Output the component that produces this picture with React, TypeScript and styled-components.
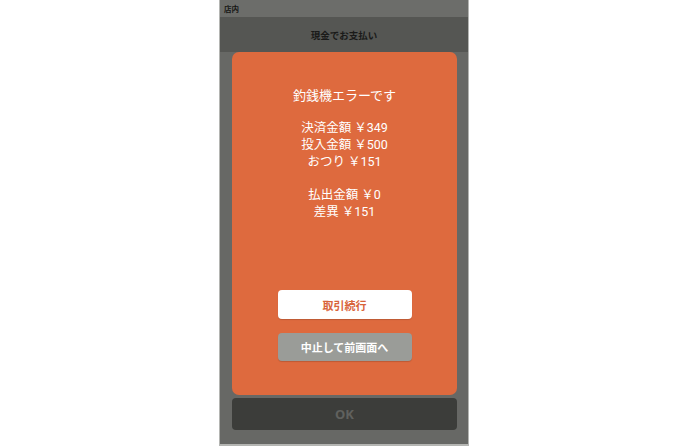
import React from "react";
import styled, { createGlobalStyle } from "styled-components";

const GlobalStyle = createGlobalStyle`
  html, body {
    margin: 0;
    padding: 0;
    background: #ffffff;
  }
  body {
    font-family: "Noto Sans CJK JP", "Noto Sans", sans-serif;
  }
`;

const App = () => {
  return (
    <>
      <GlobalStyle />
      <Page>
        <Screen>
          <StatusBar>店内</StatusBar>
          <Header>現金でお支払い</Header>
          <Content>
            <ErrorCard>
              <Title>釣銭機エラーです</Title>
              <InfoBlock>
                <Line>決済金額 ￥349</Line>
                <Line>投入金額 ￥500</Line>
                <Line>おつり ￥151</Line>
              </InfoBlock>
              <InfoBlock $gap={16}>
                <Line>払出金額 ￥0</Line>
                <Line>差異 ￥151</Line>
              </InfoBlock>
              <Actions>
                <CardButton $variant="primary">取引続行</CardButton>
                <CardButton $variant="secondary">中止して前画面へ</CardButton>
              </Actions>
            </ErrorCard>
            <OkButton disabled>OK</OkButton>
          </Content>
        </Screen>
      </Page>
    </>
  );
};

export default App;

const Page = styled.div`
  display: flex;
  justify-content: center;
  width: 100%;
  height: 446px;
`;

const Screen = styled.div`
  display: flex;
  flex-direction: column;
  width: 250px;
  height: 446px;
  box-sizing: border-box;
  border: 1px solid #b4b5b2;
  border-top: none;
  border-bottom-width: 2px;
  background: #676865;
`;

const StatusBar = styled.div`
  height: 17px;
  padding-left: 4px;
  display: flex;
  align-items: center;
  background: #6c6d6a;
  color: #161715;
  font-size: 7.5px;
  font-weight: bold;
`;

const Header = styled.div`
  height: 35px;
  display: flex;
  align-items: center;
  justify-content: center;
  background: #555653;
  color: #1a1a19;
  font-size: 9.5px;
  font-weight: bold;
`;

const Content = styled.div`
  flex: 1;
  display: flex;
  flex-direction: column;
  gap: 3px;
  padding: 0 11px 14px 12px;
`;

const ErrorCard = styled.div`
  flex: 1;
  display: flex;
  flex-direction: column;
  align-items: center;
  padding: 35px 0 34px;
  border-radius: 7px;
  background: #de6a3e;
  color: #ffffff;
  font-family: Roboto, "Noto Sans CJK JP", sans-serif;
`;

const Title = styled.div`
  font-size: 13px;
  line-height: 17px;
`;

const InfoBlock = styled.div<{ $gap?: number }>`
  margin-top: ${(p) => p.$gap ?? 15}px;
  display: flex;
  flex-direction: column;
  align-items: center;
`;

const Line = styled.div`
  font-size: 12.5px;
  line-height: 17px;
`;

const Actions = styled.div`
  margin-top: auto;
  display: flex;
  flex-direction: column;
  gap: 14px;
`;

const CardButton = styled.button<{ $variant: "primary" | "secondary" }>`
  width: 134px;
  height: ${(p) => (p.$variant === "primary" ? 29 : 28)}px;
  border: none;
  border-radius: 4px;
  font-family: "Noto Sans CJK JP", sans-serif;
  font-weight: bold;
  font-size: 11px;
  background: ${(p) => (p.$variant === "primary" ? "#ffffff" : "#9a9c98")};
  color: ${(p) => (p.$variant === "primary" ? "#d8633a" : "#ffffff")};
  box-shadow: 0 1px 1px rgba(0, 0, 0, 0.15);
  cursor: pointer;
`;

const OkButton = styled.button`
  height: 32px;
  border: none;
  border-radius: 4px;
  background: #3c3d3a;
  color: #60615e;
  font-family: "Noto Sans", sans-serif;
  font-weight: bold;
  font-size: 13px;
`;
